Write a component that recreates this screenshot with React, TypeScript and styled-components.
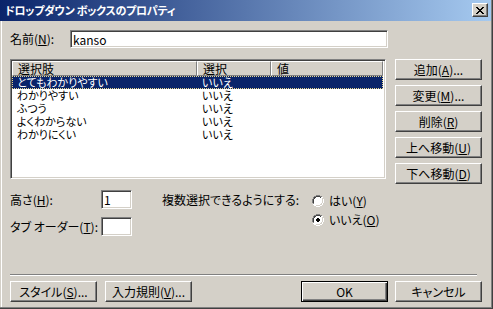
import { createGlobalStyle, styled } from 'styled-components';

const GlobalStyle = createGlobalStyle`
  html, body {
    margin: 0;
    padding: 0;
    background: #d4d0c8;
  }
  body {
    font-family: "Noto Sans CJK JP", "Noto Sans", sans-serif;
    font-size: 12px;
    font-feature-settings: "palt" 1;
    color: #000;
  }
  * { box-sizing: border-box; }
`;

type Choice = { label: string; selected: string; value: string };

const choices: Choice[] = [
  { label: 'とてもわかりやすい', selected: 'いいえ', value: '' },
  { label: 'わかりやすい', selected: 'いいえ', value: '' },
  { label: 'ふつう', selected: 'いいえ', value: '' },
  { label: 'よくわからない', selected: 'いいえ', value: '' },
  { label: 'わかりにくい', selected: 'いいえ', value: '' },
];

const Window = styled.div`
  width: 493px;
  height: 309px;
  border-right: 1px solid #404040;
  border-bottom: 1px solid #404040;
  background: #d4d0c8;
`;

const Frame = styled.div`
  height: 100%;
  display: flex;
  flex-direction: column;
  border-right: 1px solid #808080;
  border-bottom: 1px solid #808080;
`;

const TitleBar = styled.div`
  height: 21px;
  flex: none;
  display: flex;
  align-items: center;
  justify-content: space-between;
  padding: 0 3px 1px 5px;
  background: linear-gradient(to right, #0a246a, #a6caf0);
`;

const TitleText = styled.span`
  color: #fff;
  font-weight: bold;
  font-size: 11px;
  letter-spacing: -0.3px;
  line-height: 14px;
`;

const CloseButton = styled.div`
  width: 16px;
  height: 14px;
  display: flex;
  align-items: center;
  justify-content: center;
  background: #d4d0c8;
  border-top: 1px solid #fff;
  border-left: 1px solid #fff;
  border-right: 1px solid #404040;
  border-bottom: 1px solid #404040;
  box-shadow: inset -1px -1px #808080;
`;

const Body = styled.div`
  flex: 1;
  padding: 9px 9px 0 10px;
  box-shadow: inset 1px 0 0 #d4d0c8, inset 2px 0 0 #fff;
`;

const FieldRow = styled.div`
  display: flex;
  align-items: center;
  height: 18px;
`;

const Label = styled.label<{ $width: number }>`
  width: ${(p) => p.$width}px;
  flex: none;
  line-height: 18px;
  white-space: nowrap;
`;

const TextField = styled.input<{ $width: number; $height?: number }>`
  width: ${(p) => p.$width}px;
  height: ${(p) => p.$height ?? 18}px;
  flex: none;
  margin: 0;
  padding: 0 2px;
  font: inherit;
  font-size: 12px;
  color: #000;
  background: #fff;
  border: 1px solid;
  border-color: #808080 #fff #fff #808080;
  box-shadow: inset 1px 1px #404040, inset -1px -1px #d4d0c8;
  outline: none;
`;

const ListSection = styled.div`
  display: flex;
  gap: 9px;
  margin-top: 11px;
`;

const ListBox = styled.div`
  width: 376px;
  height: 120px;
  flex: none;
  background: #fff;
  border: 1px solid;
  border-color: #808080 #fff #fff #808080;
  box-shadow: inset 1px 1px #404040, inset -1px -1px #d4d0c8;
  padding: 1px 2px 1px 1px;
`;

const HeaderRow = styled.div`
  display: flex;
  height: 15px;
`;

const HeaderCell = styled.div<{ $width?: number }>`
  ${(p) => (p.$width ? `width: ${p.$width}px; flex: none;` : 'flex: 1;')}
  height: 15px;
  padding-left: 5px;
  line-height: 13px;
  background: #d4d0c8;
  border-top: 1px solid #fff;
  border-left: 1px solid #fff;
  border-right: 1px solid #808080;
  border-bottom: 1px solid #808080;
  white-space: nowrap;
`;

const ItemRow = styled.div<{ $selected?: boolean }>`
  display: flex;
  height: 13px;
  font-size: 11px;
  line-height: 13px;
  background: ${(p) => (p.$selected ? '#0a246a' : 'transparent')};
  color: ${(p) => (p.$selected ? '#fff' : '#000')};
  outline: ${(p) => (p.$selected ? '1px dotted #e8d890' : 'none')};
  outline-offset: -1px;
`;

const ItemCell = styled.div<{ $width?: number }>`
  ${(p) => (p.$width ? `width: ${p.$width}px; flex: none;` : 'flex: 1;')}
  padding-left: 5px;
  white-space: nowrap;
`;

const ButtonColumn = styled.div`
  display: flex;
  flex-direction: column;
  gap: 5px;
`;

const Button = styled.button<{ $default?: boolean }>`
  width: 87px;
  height: 21px;
  margin: 0;
  padding: 0;
  font: inherit;
  font-size: 12px;
  color: #000;
  background: #d4d0c8;
  border: 1px solid;
  border-color: ${(p) => (p.$default ? '#000' : '#fff #404040 #404040 #fff')};
  box-shadow: ${(p) =>
    p.$default
      ? 'inset 1px 1px #fff, inset -1px -1px #404040, inset -2px -2px #808080'
      : 'inset -1px -1px #808080'};
  line-height: 17px;
  white-space: nowrap;
`;

const Options = styled.div`
  display: flex;
  margin-top: 6px;
`;

const FieldGrid = styled.div`
  display: grid;
  grid-template-columns: 91px 31px;
  grid-auto-rows: 19px;
  row-gap: 8px;
  align-items: center;
`;

const MultiLabel = styled.div`
  width: 150px;
  margin-left: 30px;
  line-height: 19px;
  white-space: nowrap;
`;

const RadioGroup = styled.div`
  display: flex;
  flex-direction: column;
  margin-top: 1px;
`;

const RadioItem = styled.label`
  display: flex;
  align-items: center;
  gap: 5px;
  height: 19px;
  white-space: nowrap;
`;

const Separator = styled.div`
  width: 467px;
  height: 2px;
  margin-top: 38px;
  border-top: 1px solid #808080;
  border-bottom: 1px solid #fff;
`;

const Footer = styled.div`
  display: flex;
  justify-content: space-between;
  margin-top: 5px;
`;

const ButtonGroup = styled.div<{ $gap: number }>`
  display: flex;
  gap: ${(p) => p.$gap}px;
`;

const Radio = ({ checked }: { checked?: boolean }) => (
  <svg width="12" height="12" viewBox="0 0 12 12" shapeRendering="crispEdges">
    <path d="M4 0h4v1h2v1h1v2h1v4h-1v2h-1v1h-2v1h-4v-1h-2v-1h-1v-2h-1v-4h1v-2h1v-1h2z" fill="#fff" />
    <path d="M4 0h4v1h-4zM2 1h2v1h-2zM8 1h2v1h-2zM1 2h1v2h-1zM0 4h1v4h-1zM1 8h1v1h-1z" fill="#808080" />
    <path d="M4 1h4v1h-4zM2 2h2v1h-2zM8 2h1v1h-1zM2 3h1v1h-1zM1 4h1v4h-1z" fill="#404040" />
    <path d="M10 3h1v1h-1zM10 4h1v4h-1zM9 8h1v1h-1zM8 9h2v1h-2zM4 10h4v1h-4z" fill="#d4d0c8" />
    <path d="M11 4h1v4h-1zM10 8h1v2h-1zM8 10h2v1h-2zM4 11h4v1h-4z" fill="#fff" />
    {checked && <path d="M5 4h2v1h1v2h-1v1h-2v-1h-1v-2h1z" fill="#000" />}
  </svg>
);

const CloseIcon = () => (
  <svg width="8" height="7" viewBox="0 0 8 7" shapeRendering="crispEdges">
    <path
      d="M0 0h2v1h1v1h2v-1h1v-1h2v1h-1v1h-1v1h-1v1h1v1h1v1h1v1h-2v-1h-1v-1h-2v1h-1v1h-2v-1h1v-1h1v-1h1v-1h-1v-1h-1v-1h-1z"
      fill="#000"
    />
  </svg>
);

export default function App() {
  return (
    <>
      <GlobalStyle />
      <Window>
        <Frame>
          <TitleBar>
            <TitleText>ドロップダウン ボックスのプロパティ</TitleText>
            <CloseButton>
              <CloseIcon />
            </CloseButton>
          </TitleBar>
          <Body>
            <FieldRow>
              <Label $width={60}>
                名前(<u>N</u>):
              </Label>
              <TextField $width={318} defaultValue="kanso" readOnly />
            </FieldRow>

            <ListSection>
              <ListBox>
                <HeaderRow>
                  <HeaderCell $width={185}>選択肢</HeaderCell>
                  <HeaderCell $width={74}>選択</HeaderCell>
                  <HeaderCell $width={112}>値</HeaderCell>
                </HeaderRow>
                {choices.map((c, i) => (
                  <ItemRow key={c.label} $selected={i === 0}>
                    <ItemCell $width={185}>{c.label}</ItemCell>
                    <ItemCell $width={74}>{c.selected}</ItemCell>
                    <ItemCell>{c.value}</ItemCell>
                  </ItemRow>
                ))}
              </ListBox>
              <ButtonColumn>
                <Button>
                  追加(<u>A</u>)...
                </Button>
                <Button>
                  変更(<u>M</u>)...
                </Button>
                <Button>
                  削除(<u>R</u>)
                </Button>
                <Button>
                  上へ移動(<u>U</u>)
                </Button>
                <Button>
                  下へ移動(<u>D</u>)
                </Button>
              </ButtonColumn>
            </ListSection>

            <Options>
              <FieldGrid>
                <Label $width={91}>
                  高さ(<u>H</u>):
                </Label>
                <TextField $width={31} $height={19} defaultValue="1" readOnly />
                <Label $width={91}>
                  タブ オーダー(<u>T</u>):
                </Label>
                <TextField $width={31} $height={19} defaultValue="" readOnly />
              </FieldGrid>
              <MultiLabel>複数選択できるようにする:</MultiLabel>
              <RadioGroup>
                <RadioItem>
                  <Radio />
                  <span>
                    はい(<u>Y</u>)
                  </span>
                </RadioItem>
                <RadioItem>
                  <Radio checked />
                  <span>
                    いいえ(<u>O</u>)
                  </span>
                </RadioItem>
              </RadioGroup>
            </Options>

            <Separator />

            <Footer>
              <ButtonGroup $gap={8}>
                <Button>
                  スタイル(<u>S</u>)...
                </Button>
                <Button>
                  入力規則(<u>V</u>)...
                </Button>
              </ButtonGroup>
              <ButtonGroup $gap={7}>
                <Button $default>OK</Button>
                <Button>キャンセル</Button>
              </ButtonGroup>
            </Footer>
          </Body>
        </Frame>
      </Window>
    </>
  );
}
